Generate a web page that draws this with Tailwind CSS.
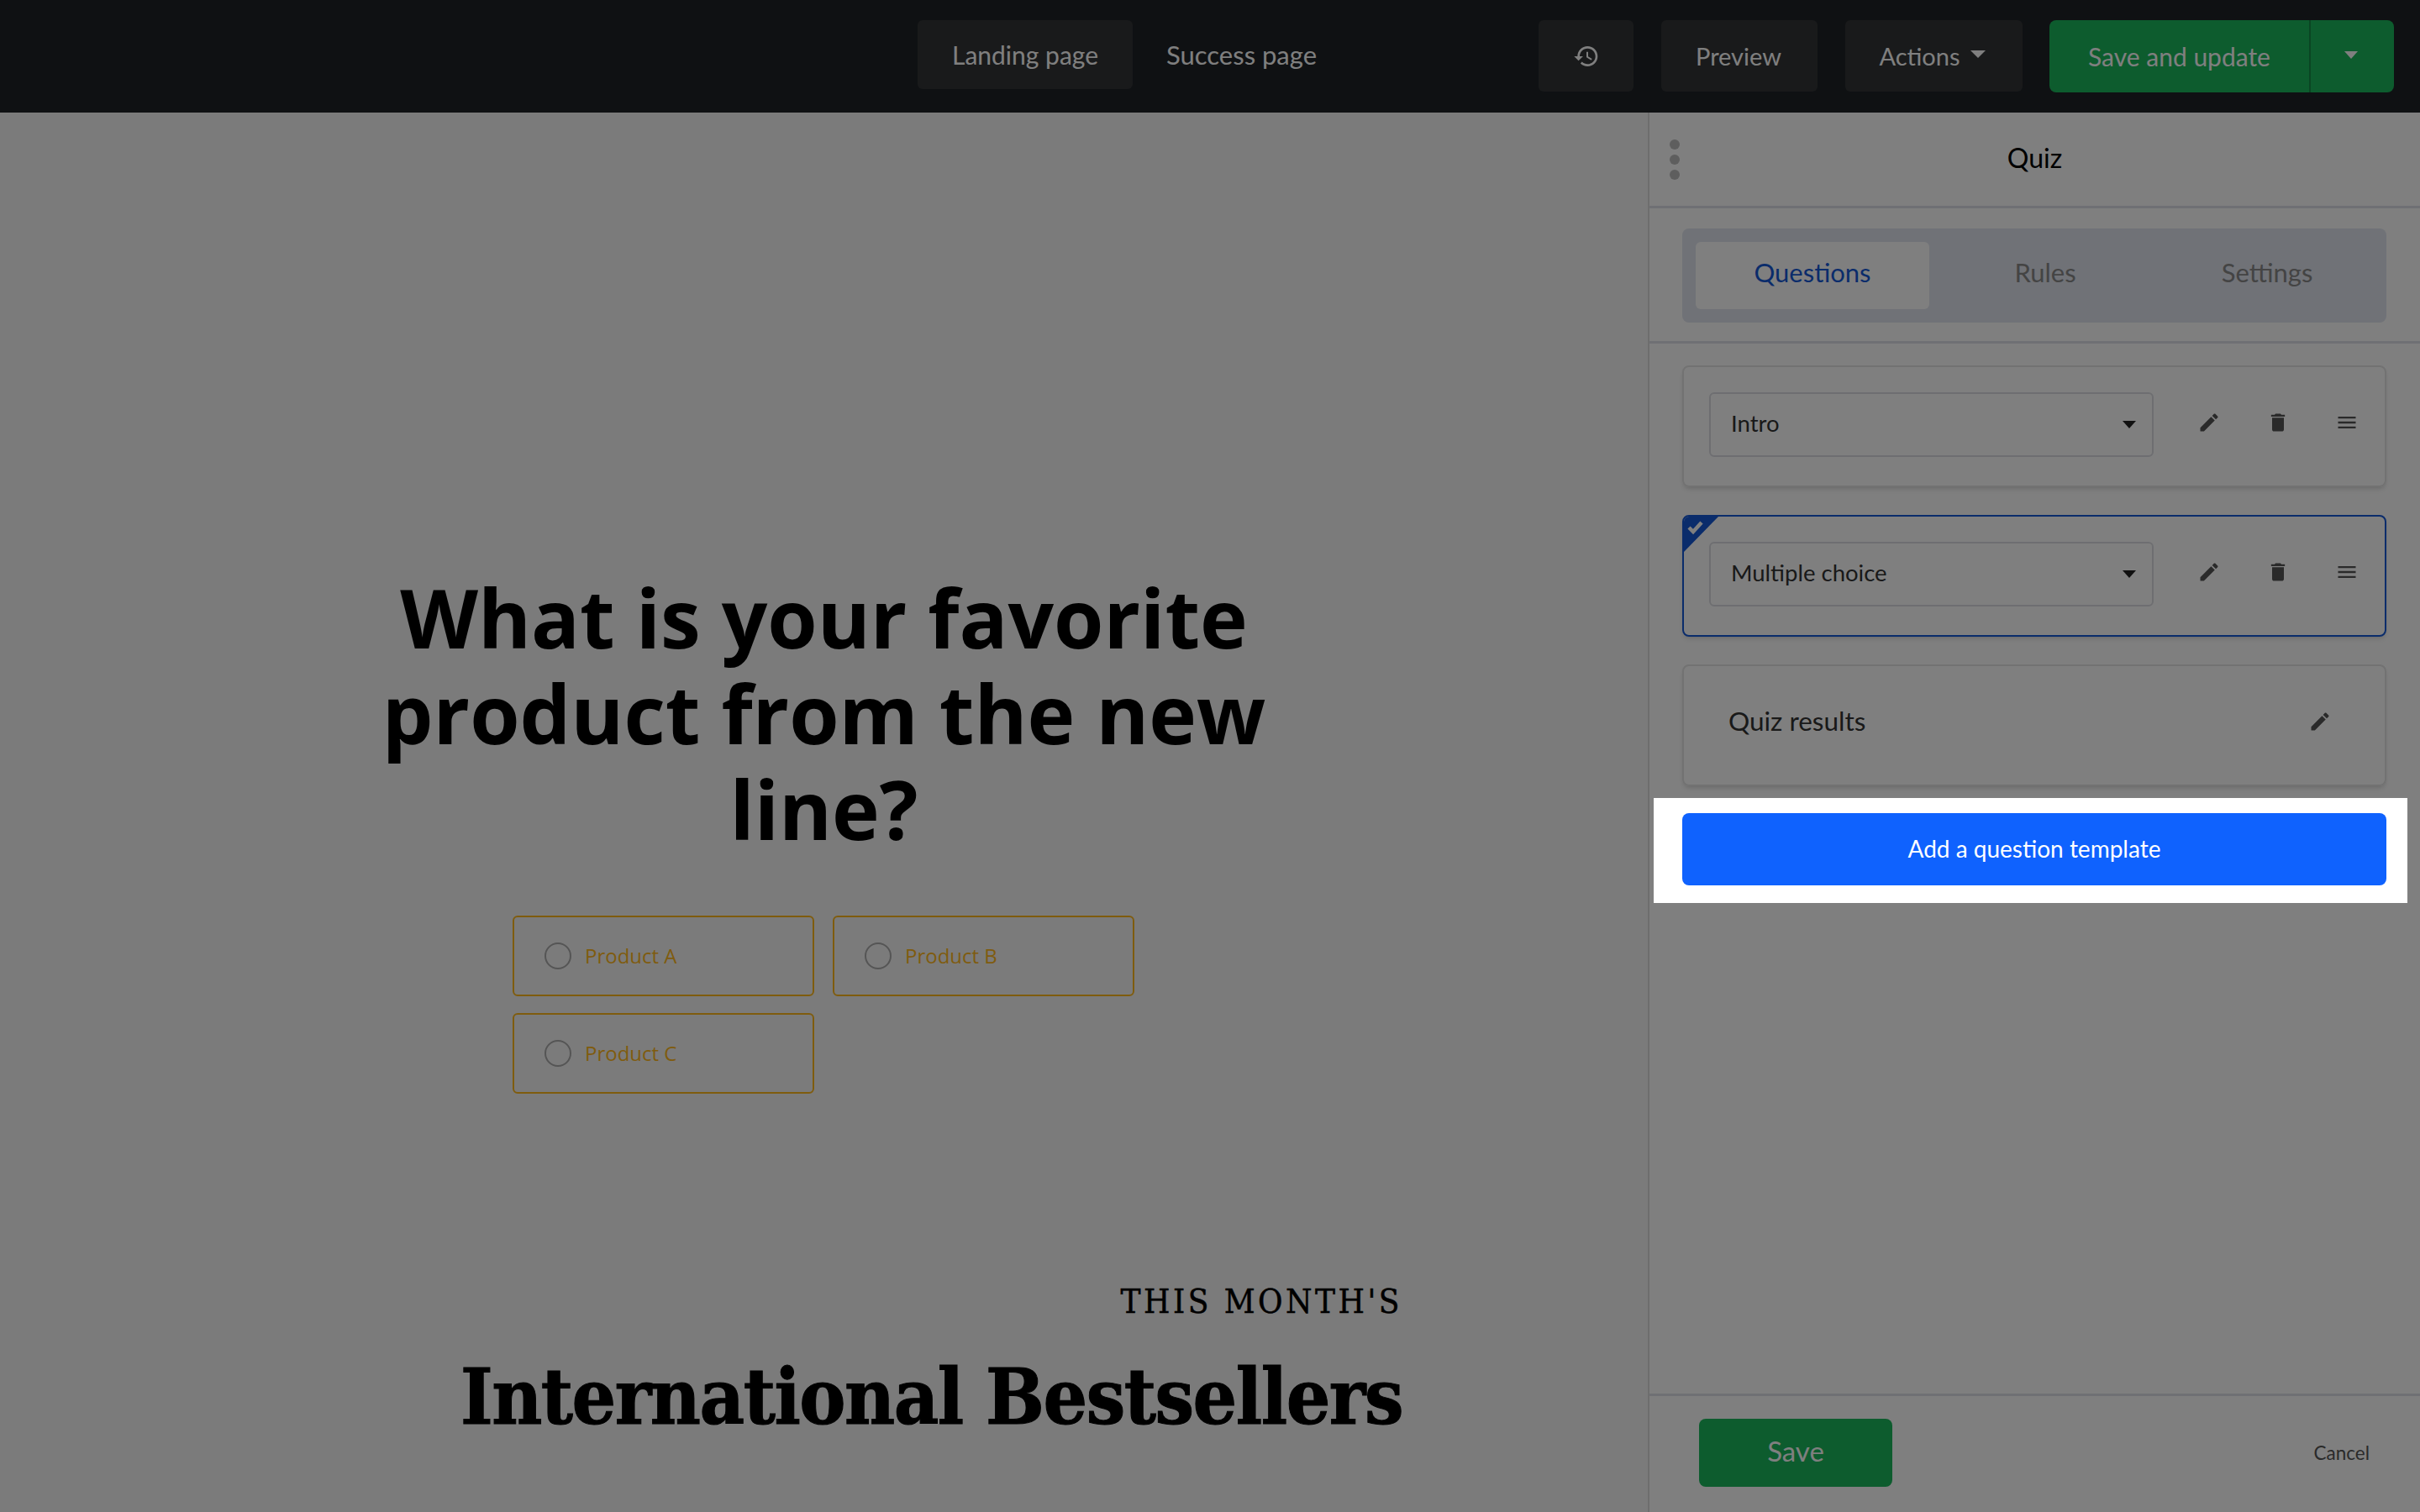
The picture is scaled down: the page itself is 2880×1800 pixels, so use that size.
<!DOCTYPE html>
<html lang="en">
  <head>
    <meta charset="UTF-8" />
    <meta name="viewport" content="width=device-width, initial-scale=1.0" />
    <title>Quiz</title>
    <script src="https://cdn.jsdelivr.net/npm/@tailwindcss/browser@4"></script>
  </head>
  <body class="h-[1800px] w-[2880px] overflow-hidden bg-[#f6f6f6] font-['Lato',sans-serif] select-none">
    <!-- dim layer, the add button row sits above it -->
    <div class="fixed inset-0 z-10 bg-black/50"></div>

    <nav class="flex h-[134px] items-start bg-[#1e2226] pt-6 text-[29px] text-white">
      <div class="ml-[1092px] flex h-[82px] w-[256px] items-center justify-center rounded-md bg-[#323436] text-[30px]">Landing page</div>
      <div class="ml-10 flex h-[82px] w-[180px] items-center text-[31px] whitespace-nowrap">Success page</div>
      <button class="ml-[263px] flex h-[85px] w-[113px] items-center justify-center rounded-md bg-[#323436]">
        <svg class="h-[32px] w-[32px]" viewBox="0 0 24 24" fill="currentColor"><path d="M13 3c-4.97 0-9 4.03-9 9H1l3.89 3.89.07.14L9 12H6c0-3.87 3.13-7 7-7s7 3.13 7 7-3.13 7-7 7c-1.93 0-3.68-.79-4.94-2.06l-1.42 1.42C8.27 19.99 10.51 21 13 21c4.97 0 9-4.03 9-9s-4.03-9-9-9zm-1 5v5l4.28 2.54.72-1.21-3.5-2.08V8H12z"/></svg>
      </button>
      <button class="ml-[33px] flex h-[85px] w-[186px] items-center justify-center rounded-md bg-[#323436] pr-[2px]">Preview</button>
      <button class="ml-[33px] flex h-[85px] w-[211px] items-center justify-center gap-3 rounded-md bg-[#323436] pr-1">
        Actions
        <span class="mb-1 border-x-[9px] border-t-[9px] border-x-transparent border-t-white"></span>
      </button>
      <div class="ml-8 flex h-[86px] w-[410px] overflow-hidden rounded-lg bg-[#1ab85c] text-[30px]">
        <button class="flex w-[311px] items-center justify-center border-r-2 border-[#148a46]">Save and update</button>
        <button class="flex flex-1 items-center justify-center pr-[3px]">
          <span class="mb-1 border-x-[8px] border-t-[9px] border-x-transparent border-t-white"></span>
        </button>
      </div>
    </nav>

    <div class="flex h-[1666px]">
      <main class="w-[1961px] pt-[544px] font-['Open_Sans',sans-serif]">
        <h1 class="mx-auto w-[1120px] text-center text-[96px] leading-[114px] font-bold text-black">What is your favorite product from the new line?</h1>

        <div class="mt-[70px] ml-[610px] grid w-[740px] grid-cols-2 gap-x-[22px] gap-y-5 text-[24px] text-[#ffb81c]">
          <div class="flex h-[96px] items-center gap-4 rounded-md border-2 border-[#ffb81c] pl-9">
            <span class="h-8 w-8 rounded-full border-2 border-[#aaaaaa]"></span>
            Product A
          </div>
          <div class="flex h-[96px] items-center gap-4 rounded-md border-2 border-[#ffb81c] pl-9">
            <span class="h-8 w-8 rounded-full border-2 border-[#aaaaaa]"></span>
            Product B
          </div>
          <div class="flex h-[96px] items-center gap-4 rounded-md border-2 border-[#ffb81c] pl-9">
            <span class="h-8 w-8 rounded-full border-2 border-[#aaaaaa]"></span>
            Product C
          </div>
        </div>

        <div class="mt-[222px] mr-[292px] text-right font-['DejaVu_Serif_Condensed','DejaVu_Serif',serif] text-black">
          <p class="text-[40px] leading-[50px] tracking-[3.5px] [-webkit-text-stroke:0.5px_black]">THIS MONTH'S</p>
          <p class="mt-[34px] text-[92px] leading-[110px] font-bold tracking-[-1.5px] [-webkit-text-stroke:1px_black]">International Bestsellers</p>
        </div>
      </main>

      <aside class="flex w-[919px] flex-col border-l-2 border-[#dcdcdc] bg-white">
        <div class="relative flex h-[114px] items-center justify-center border-b-[3px] border-[#dfe1e8] pb-1 text-[32px] text-black">
          <div class="absolute top-[32px] left-[24px] flex flex-col gap-[6px]">
            <span class="h-3 w-3 rounded-full bg-[#bdbdbd]"></span>
            <span class="h-3 w-3 rounded-full bg-[#bdbdbd]"></span>
            <span class="h-3 w-3 rounded-full bg-[#bdbdbd]"></span>
          </div>
          Quiz
        </div>

        <div class="border-b-[3px] border-[#dfe1e8] pt-6 pr-10 pb-[22px] pl-[39px]">
          <div class="flex h-[112px] items-center rounded-lg bg-[#e0e4ee] px-4 text-[31px] text-[#888888]">
            <div class="flex h-[80px] w-[278px] items-center justify-center rounded-md bg-white pb-2 text-[#1558d6]">Questions</div>
            <div class="flex h-[80px] w-[276px] items-center justify-center pb-2">Rules</div>
            <div class="flex h-[80px] flex-1 items-center justify-center pb-2">Settings</div>
          </div>
        </div>

        <div class="flex flex-col pt-[26px] pr-10 pl-[39px] text-[27.5px] text-[#333333]">
          <div class="flex h-[145px] items-start rounded-lg border-2 border-[#e4e4e4] pt-[30px] pl-[30px] shadow-md">
            <div class="flex h-[77px] w-[529px] items-center justify-between rounded-md border-2 border-[#dcdde3] pr-[19px] pl-6">
              <span class="pb-[3px]">Intro</span>
              <span class="border-x-[8px] border-t-[9px] border-x-transparent border-t-[#222222]"></span>
            </div>
            <svg class="mt-[22px] ml-[52px] h-[28px] w-[28px] text-[#555555]" viewBox="0 0 24 24" fill="currentColor"><path d="M3 17.25V21h3.75L17.81 9.94l-3.75-3.75L3 17.25zM20.71 7.04c.39-.39.39-1.02 0-1.41l-2.34-2.34c-.39-.39-1.02-.39-1.41 0l-1.83 1.83 3.75 3.75 1.83-1.83z"/></svg>
            <svg class="mt-[22px] ml-[54px] h-[28px] w-[28px] text-[#555555]" viewBox="0 0 24 24" fill="currentColor"><path d="M6 19c0 1.1.9 2 2 2h8c1.1 0 2-.9 2-2V7H6v12zM19 4h-3.5l-1-1h-5l-1 1H5v2h14V4z"/></svg>
            <svg class="mt-[22px] ml-[54px] h-[28px] w-[28px] text-[#555555]" viewBox="0 0 24 24" fill="currentColor"><path d="M3 18h18v-2H3v2zm0-5h18v-2H3v2zm0-7v2h18V6H3z"/></svg>
          </div>

          <div class="relative mt-[33px] flex h-[145px] items-start overflow-hidden rounded-lg border-2 border-[#1558d6] pt-[30px] pl-[30px] shadow-md">
            <svg class="absolute top-0 left-0 h-[42px] w-[41px]" viewBox="0 0 41 42"><path d="M0 0h41L0 42z" fill="#1558d6"/><path d="M6 13l5 5 10-11" fill="none" stroke="#fff" stroke-width="4.5"/></svg>
            <div class="flex h-[77px] w-[529px] items-center justify-between rounded-md border-2 border-[#dcdde3] pr-[19px] pl-6">
              <span class="pb-[3px]">Multiple choice</span>
              <span class="border-x-[8px] border-t-[9px] border-x-transparent border-t-[#222222]"></span>
            </div>
            <svg class="mt-[22px] ml-[52px] h-[28px] w-[28px] text-[#555555]" viewBox="0 0 24 24" fill="currentColor"><path d="M3 17.25V21h3.75L17.81 9.94l-3.75-3.75L3 17.25zM20.71 7.04c.39-.39.39-1.02 0-1.41l-2.34-2.34c-.39-.39-1.02-.39-1.41 0l-1.83 1.83 3.75 3.75 1.83-1.83z"/></svg>
            <svg class="mt-[22px] ml-[54px] h-[28px] w-[28px] text-[#555555]" viewBox="0 0 24 24" fill="currentColor"><path d="M6 19c0 1.1.9 2 2 2h8c1.1 0 2-.9 2-2V7H6v12zM19 4h-3.5l-1-1h-5l-1 1H5v2h14V4z"/></svg>
            <svg class="mt-[22px] ml-[54px] h-[28px] w-[28px] text-[#555555]" viewBox="0 0 24 24" fill="currentColor"><path d="M3 18h18v-2H3v2zm0-5h18v-2H3v2zm0-7v2h18V6H3z"/></svg>
          </div>

          <div class="mt-[33px] flex h-[145px] items-center justify-between rounded-lg border-2 border-[#e4e4e4] pr-[63px] pb-[10px] pl-[53px] text-[31.5px] shadow-md">
            Quiz results
            <svg class="h-[28px] w-[28px] text-[#555555]" viewBox="0 0 24 24" fill="currentColor"><path d="M3 17.25V21h3.75L17.81 9.94l-3.75-3.75L3 17.25zM20.71 7.04c.39-.39.39-1.02 0-1.41l-2.34-2.34c-.39-.39-1.02-.39-1.41 0l-1.83 1.83 3.75 3.75 1.83-1.83z"/></svg>
          </div>

          <div class="relative z-20 mt-[14px] -mr-[25px] -ml-[34px] bg-white pt-[18px] pr-[25px] pb-[21px] pl-[34px]">
            <button class="flex h-[86px] w-full items-center justify-center rounded-lg bg-[#0f62fe] pb-[3px] text-[28px] text-white">Add a question template</button>
          </div>
        </div>

        <div class="mt-auto flex h-[141px] items-start justify-between border-t-[3px] border-[#dfe1e8] pt-[27px] pr-[60px] pl-[59px]">
          <button class="flex h-[81px] w-[230px] items-center justify-center rounded-lg bg-[#1ab85c] pb-1 text-[33px] text-white">Save</button>
          <button class="h-[81px] text-[22.5px] text-[#555555]">Cancel</button>
        </div>
      </aside>
    </div>
  </body>
</html>
